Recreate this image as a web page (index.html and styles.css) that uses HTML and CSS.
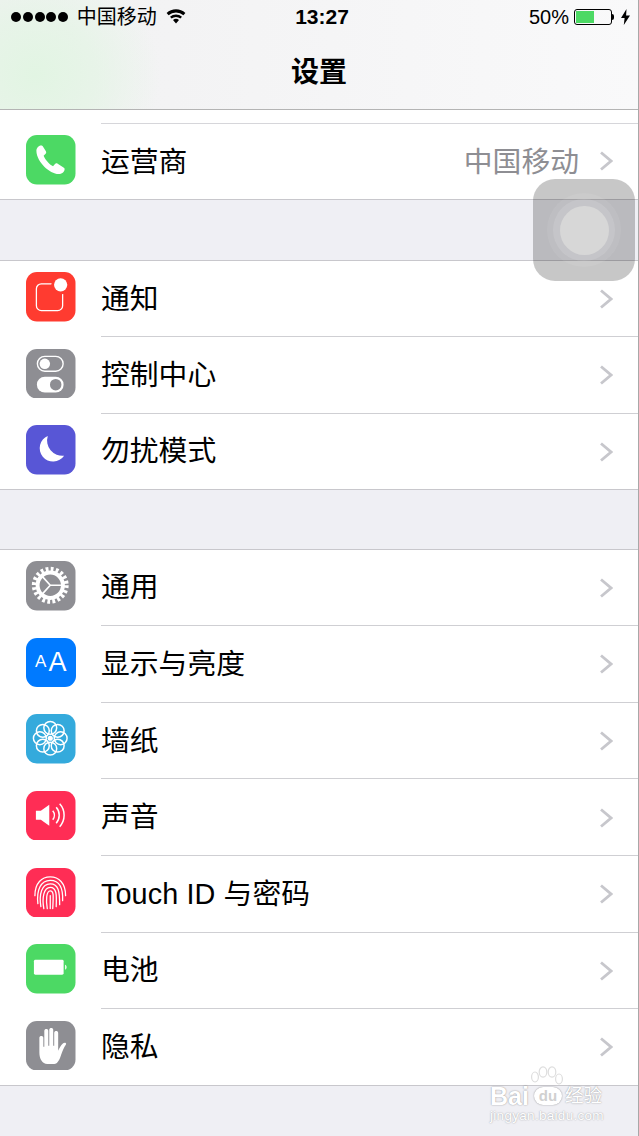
FILE: index.html
```html
<!DOCTYPE html>
<html lang="zh">
<head>
<meta charset="utf-8">
<title>设置</title>
<link rel="stylesheet" href="styles.css">
</head>
<body>
<div class="page">
  <header class="nav">
    <div class="status">
      <div class="status-left">
        <span class="dots"><i></i><i></i><i></i><i></i><i></i></span>
        <span class="carrier">中国移动</span>
        <svg class="wifi" viewBox="0 0 20 16"><path d="M10 15.500l-3-3.400a4.400 4.400 0 0 1 6 0zM5.600 10.600L4 8.800a9 9 0 0 1 12 0l-1.600 1.800a6.600 6.600 0 0 0-8.800 0zM2.600 7.300L.6 5a14 14 0 0 1 18.800 0l-2 2.300a11.200 11.200 0 0 0-14.800 0z" fill="#000"/></svg>
      </div>
      <div class="time">13:27</div>
      <div class="status-right">
        <span class="pct">50%</span>
        <span class="batt"><b></b></span><span class="batt-tip"></span>
        <svg class="bolt" viewBox="0 0 9 16"><path d="M5.500 0L0 9h3.600L2.800 16 9 6.500H5.100z" fill="#000"/></svg>
      </div>
    </div>
    <h1 class="title">设置</h1>
  </header>

  <div class="peek"></div>
  <section class="group first">
    <div class="row">
      <svg class="icon" viewBox="0 0 50 50"><rect width="50" height="50" rx="11" fill="#4cd964"/><path d="M15 10.500c-2 0-4.500 2.500-4.500 5.500 0 6 4 12 8 16s10 7.500 14.500 7.500c3 0 6-2.500 6-5 0-1-.5-1.500-1.500-2l-5.500-3.500c-1-.6-2-.5-2.700.3l-2 2.200c-3-1-8-6.500-9.500-10.500l2-2c.7-.7.8-1.600.3-2.500l-3-5c-.5-.9-1-1-1.600-1z" fill="#fff"/></svg>
      <span class="label">运营商</span>
      <span class="value">中国移动</span>
      <svg class="chev" viewBox="0 0 14 20"><path d="M2 1.500l10 8.500-10 8.500" fill="none" stroke="#c7c7cc" stroke-width="2.800"/></svg>
    </div>
  </section>

  <section class="group mid">
    <div class="row">
      <svg class="icon" viewBox="0 0 50 50"><rect width="50" height="50" rx="11" fill="#ff3b30"/><rect x="10.500" y="12" width="26.500" height="27" rx="5" fill="none" stroke="#fff" stroke-width="1.300"/><circle cx="35" cy="13" r="9.500" fill="#ff3b30"/><circle cx="35" cy="13" r="6.700" fill="#fff"/></svg>
      <span class="label">通知</span>
      <svg class="chev" viewBox="0 0 14 20"><path d="M2 1.500l10 8.500-10 8.500" fill="none" stroke="#c7c7cc" stroke-width="2.800"/></svg>
    </div>
    <div class="row">
      <svg class="icon" viewBox="0 0 50 50"><rect width="50" height="50" rx="11" fill="#8e8e93"/><rect x="11.500" y="7.500" width="26" height="15" rx="7.500" fill="none" stroke="#fff" stroke-width="1.400"/><circle cx="19" cy="15" r="5.300" fill="#fff"/><rect x="11" y="28" width="27" height="16" rx="8" fill="#fff"/><circle cx="30" cy="36" r="5.800" fill="#8e8e93"/></svg>
      <span class="label">控制中心</span>
      <svg class="chev" viewBox="0 0 14 20"><path d="M2 1.500l10 8.500-10 8.500" fill="none" stroke="#c7c7cc" stroke-width="2.800"/></svg>
    </div>
    <div class="row">
      <svg class="icon" viewBox="0 0 50 50"><rect width="50" height="50" rx="11" fill="#5856d6"/><path d="M22 11A13.500 13.500 0 1 0 38.500 31 15.500 15.500 0 0 1 22 11z" fill="#fff"/></svg>
      <span class="label">勿扰模式</span>
      <svg class="chev" viewBox="0 0 14 20"><path d="M2 1.500l10 8.500-10 8.500" fill="none" stroke="#c7c7cc" stroke-width="2.800"/></svg>
    </div>
  </section>

  <section class="group last">
    <div class="row">
      <svg class="icon" viewBox="0 0 50 50"><rect width="50" height="50" rx="11" fill="#8e8e93"/><circle cx="24.500" cy="24.500" r="16.300" fill="none" stroke="#fff" stroke-width="4.600" stroke-dasharray="2.800 2.320"/><circle cx="24.500" cy="24.500" r="12.800" fill="none" stroke="#fff" stroke-width="4"/><path d="M24.500 24.500H38M24.500 24.500L15.500 14.500M24.500 24.500L15.500 34.500" stroke="#fff" stroke-width="1.700" fill="none"/></svg>
      <span class="label">通用</span>
      <svg class="chev" viewBox="0 0 14 20"><path d="M2 1.500l10 8.500-10 8.500" fill="none" stroke="#c7c7cc" stroke-width="2.800"/></svg>
    </div>
    <div class="row">
      <span class="icon aa"><span class="a-small">A</span><span class="a-big">A</span></span>
      <span class="label">显示与亮度</span>
      <svg class="chev" viewBox="0 0 14 20"><path d="M2 1.500l10 8.500-10 8.500" fill="none" stroke="#c7c7cc" stroke-width="2.800"/></svg>
    </div>
    <div class="row">
      <svg class="icon" viewBox="0 0 50 50"><rect width="50" height="50" rx="11" fill="#34aadc"/><g fill="none" stroke="#fff" stroke-width="1.500"><circle cx="24.500" cy="14" r="6.500"/><circle cx="24.500" cy="35" r="6.500"/><circle cx="14" cy="24.500" r="6.500"/><circle cx="35" cy="24.500" r="6.500"/><circle cx="17" cy="17" r="6.500"/><circle cx="32" cy="17" r="6.500"/><circle cx="17" cy="32" r="6.500"/><circle cx="32" cy="32" r="6.500"/></g><circle cx="24.500" cy="24.500" r="2.600" fill="#fff"/></svg>
      <span class="label">墙纸</span>
      <svg class="chev" viewBox="0 0 14 20"><path d="M2 1.500l10 8.500-10 8.500" fill="none" stroke="#c7c7cc" stroke-width="2.800"/></svg>
    </div>
    <div class="row">
      <svg class="icon" viewBox="0 0 50 50"><rect width="50" height="50" rx="11" fill="#ff2d55"/><path d="M10 20h5l8.500-6v21L15 29h-5z" fill="#fff"/><g fill="none" stroke="#fff" stroke-width="1.500"><path d="M27 20a7 7 0 0 1 0 9"/><path d="M30.500 16.500a12 12 0 0 1 0 16"/><path d="M34 13a17 17 0 0 1 0 23"/></g></svg>
      <span class="label">声音</span>
      <svg class="chev" viewBox="0 0 14 20"><path d="M2 1.500l10 8.500-10 8.500" fill="none" stroke="#c7c7cc" stroke-width="2.800"/></svg>
    </div>
    <div class="row">
      <svg class="icon" viewBox="0 0 50 50"><rect width="50" height="50" rx="11" fill="#ff2d55"/><g fill="none" stroke="#fff" stroke-width="1.300" stroke-linecap="round"><path d="M9 28C9 15 16 9 24.500 9S40 15 40 28"/><path d="M12 36C10.500 22 15 12.500 24.500 12.500S37.500 20 37 33"/><path d="M15 39C13 26 16 16 24.500 16S34 24 34 37"/><path d="M18 41C16 30 18 19.500 24.500 19.500S31 27 30.500 39"/><path d="M21.500 41C20 33 20.500 23 24.500 23S27.500 30 27 41"/><path d="M24.500 28V41"/></g></svg>
      <span class="label touch">Touch ID 与密码</span>
      <svg class="chev" viewBox="0 0 14 20"><path d="M2 1.500l10 8.500-10 8.500" fill="none" stroke="#c7c7cc" stroke-width="2.800"/></svg>
    </div>
    <div class="row">
      <svg class="icon" viewBox="0 0 50 50"><rect width="50" height="50" rx="11" fill="#4cd964"/><rect x="8" y="16" width="30" height="15" rx="1.500" fill="#fff"/><path d="M39.500 21c1 .3 1.500 1.500 1.500 2.500s-.5 2.200-1.500 2.500z" fill="#fff"/></svg>
      <span class="label">电池</span>
      <svg class="chev" viewBox="0 0 14 20"><path d="M2 1.500l10 8.500-10 8.500" fill="none" stroke="#c7c7cc" stroke-width="2.800"/></svg>
    </div>
    <div class="row">
      <svg class="icon" viewBox="0 0 50 50"><rect width="50" height="50" rx="11" fill="#8e8e93"/><path d="M13.500 17c0-2.500 4-2.500 4 0v9h1V10c0-2.500 4-2.500 4 0v15h1V9c0-2.500 4-2.500 4 0v16h1V12c0-2.500 4-2.500 4 0v18c1-2 2.500-5.500 5-7.500 1.500-1.200 3.500-.5 3 1-2 3-3.500 6.500-5 10.500-1.500 5-3.500 9-7 9.500h-7c-5-.5-8-5-8-12z" fill="#fff"/></svg>
      <span class="label">隐私</span>
      <svg class="chev" viewBox="0 0 14 20"><path d="M2 1.500l10 8.500-10 8.500" fill="none" stroke="#c7c7cc" stroke-width="2.800"/></svg>
    </div>
  </section>

  <div class="assist"><div class="ring-a"><div class="ring-b"><div class="ring-c"></div></div></div></div>

  <div class="mark">
    <svg class="paw" viewBox="0 0 34 26"><g fill="#fff" stroke="#ddd" stroke-width="1.200"><ellipse cx="5" cy="11" rx="3.400" ry="5"/><ellipse cx="13" cy="6" rx="3.800" ry="5.200"/><ellipse cx="22" cy="6" rx="3.800" ry="5.200"/><ellipse cx="29" cy="13" rx="3.400" ry="5"/></g></svg>
    <div class="mark-main"><span>Bai</span><span class="du">du</span><span class="jy">经验</span></div>
    <div class="mark-sub">jingyan.baidu.com</div>
  </div>
</div>
</body>
</html>
```

FILE: styles.css
```css
* { box-sizing: border-box; }
html, body { margin: 0; padding: 0; height: 1136px; overflow: hidden; }
body { font-family: "Liberation Sans", "Noto Sans CJK SC", sans-serif; color: #000; }

.page {
  position: relative;
  width: 639px;
  height: 1136px;
  background: #efeff4;
  border-right: 1px solid #a8a8a8;
  overflow: hidden;
}

.nav {
  height: 110px;
  border-bottom: 1px solid #b4b4b4;
  display: flex;
  flex-direction: column;
  background:
    radial-gradient(ellipse 125px 115px at 35px 75px, #e2f5e3 0%, rgba(226,245,227,.65) 50%, rgba(226,245,227,0) 100%),
    linear-gradient(90deg, #f1f1f2 0%, #f4f4f5 40%, #f9f9fa 100%);
}
.status {
  height: 35px;
  display: grid;
  grid-template-columns: 1fr auto 1fr;
  align-items: center;
}
.status-left { display: flex; align-items: center; padding-left: 11px; }
.dots { display: flex; gap: 1.800px; }
.dots i { width: 10px; height: 10px; border-radius: 50%; background: #000; }
.carrier { margin-left: 8.500px; font-size: 20px; line-height: 34px; }
.wifi { width: 20px; height: 16px; margin-left: 9px; margin-top: -2px; }
.time { font-size: 21px; font-weight: 700; line-height: 34px; margin-left: 6px; }
.status-right { display: flex; align-items: center; justify-content: flex-end; padding-right: 8px; }
.pct { font-size: 20px; margin-right: 5px; }
.batt {
  width: 38px; height: 16px;
  border: 1px solid #000;
  border-radius: 3px;
  padding: 1px;
  display: block;
}
.batt b { display: block; width: 18px; height: 100%; background: #4cd964; }
.batt-tip { width: 2px; height: 6px; background: #000; border-radius: 0 2px 2px 0; }
.bolt { width: 9px; height: 16px; margin-left: 7px; }

.title {
  margin: 2px 0 0;
  flex: 1;
  text-align: center;
  font-size: 28px;
  font-weight: 700;
  line-height: 74px;
}

.peek { height: 14px; background: #fff; position: relative; }
.peek::after {
  content: "";
  position: absolute;
  left: 101px; right: 0; bottom: 0;
  height: 1px;
  background: #d6d6da;
}

.group { background: #fff; }
.group.mid { margin-top: 60px; border-top: 1px solid #c8c7cc; }
.group.last { margin-top: 58.600px; border-top: 1px solid #c8c7cc; }

.row {
  height: 76.600px;
  display: flex;
  align-items: center;
  padding: 0 25px 4px 26px;
  position: relative;
}
.first .row { height: 76px; }
.mid .row { height: 76.330px; }
.row::after {
  content: "";
  position: absolute;
  left: 101px; right: 0; bottom: 0;
  height: 1px;
  background: #cfcfd3;
}
.row:last-child::after { left: 0; background: #c8c7cc; }

.icon { width: 49.500px; height: 49.500px; flex: none; display: block; }
.label { margin-left: 25.500px; padding-top: 3px; font-size: 28.800px; line-height: 40px; flex: 1; white-space: nowrap; }
.touch { letter-spacing: .1px; }
.value { font-size: 28.800px; line-height: 40px; padding-top: 3px; color: #8e8e93; margin-right: 20px; }
.chev { width: 14px; height: 20px; flex: none; margin-top: 4px; }
.first .chev { margin-top: 2px; }

.aa {
  background: #007aff;
  border-radius: 11px;
  color: #fff;
  display: flex;
  align-items: center;
  justify-content: center;
  gap: 2px;
}
.a-small { font-size: 17px; line-height: 20px; }
.a-big { font-size: 27px; line-height: 30px; }

.assist {
  position: absolute;
  left: 533px; top: 179px;
  width: 102px; height: 102px;
  border-radius: 22px;
  background: rgba(0,0,0,.22);
  display: flex;
  align-items: center;
  justify-content: center;
}
.ring-a { width: 74px; height: 74px; border-radius: 50%; background: rgba(255,255,255,.07); display: flex; align-items: center; justify-content: center; }
.ring-b { width: 62px; height: 62px; border-radius: 50%; background: rgba(255,255,255,.12); display: flex; align-items: center; justify-content: center; }
.ring-c { width: 49px; height: 49px; border-radius: 50%; background: #d7d7d7; }

.mark {
  position: absolute;
  left: 490px; top: 1066px;
  width: 116px;
  color: #fff;
}
.paw { position: absolute; left: 40px; top: 0; width: 34px; height: 26px; }
.mark-main {
  position: relative;
  margin-top: 19px;
  display: flex;
  align-items: center;
  font-size: 25px;
  font-weight: 700;
  line-height: 22px;
  text-shadow: 0 0 1.500px rgba(0,0,0,.45);
}
.du {
  width: 28px;
  height: 18px;
  margin: 0 3px 0 5px;
  border-radius: 9px;
  background: #fff;
  box-shadow: 0 0 1.500px rgba(0,0,0,.45);
  color: #d0d0d0;
  font-size: 15px;
  line-height: 18px;
  text-align: center;
  text-shadow: none;
}
.jy { font-size: 18.500px; font-weight: 400; }
.mark-sub {
  margin-top: 1px;
  font-size: 13.500px;
  line-height: 16px;
  letter-spacing: .3px;
  text-shadow: 0 0 1.500px rgba(0,0,0,.4);
}
```
